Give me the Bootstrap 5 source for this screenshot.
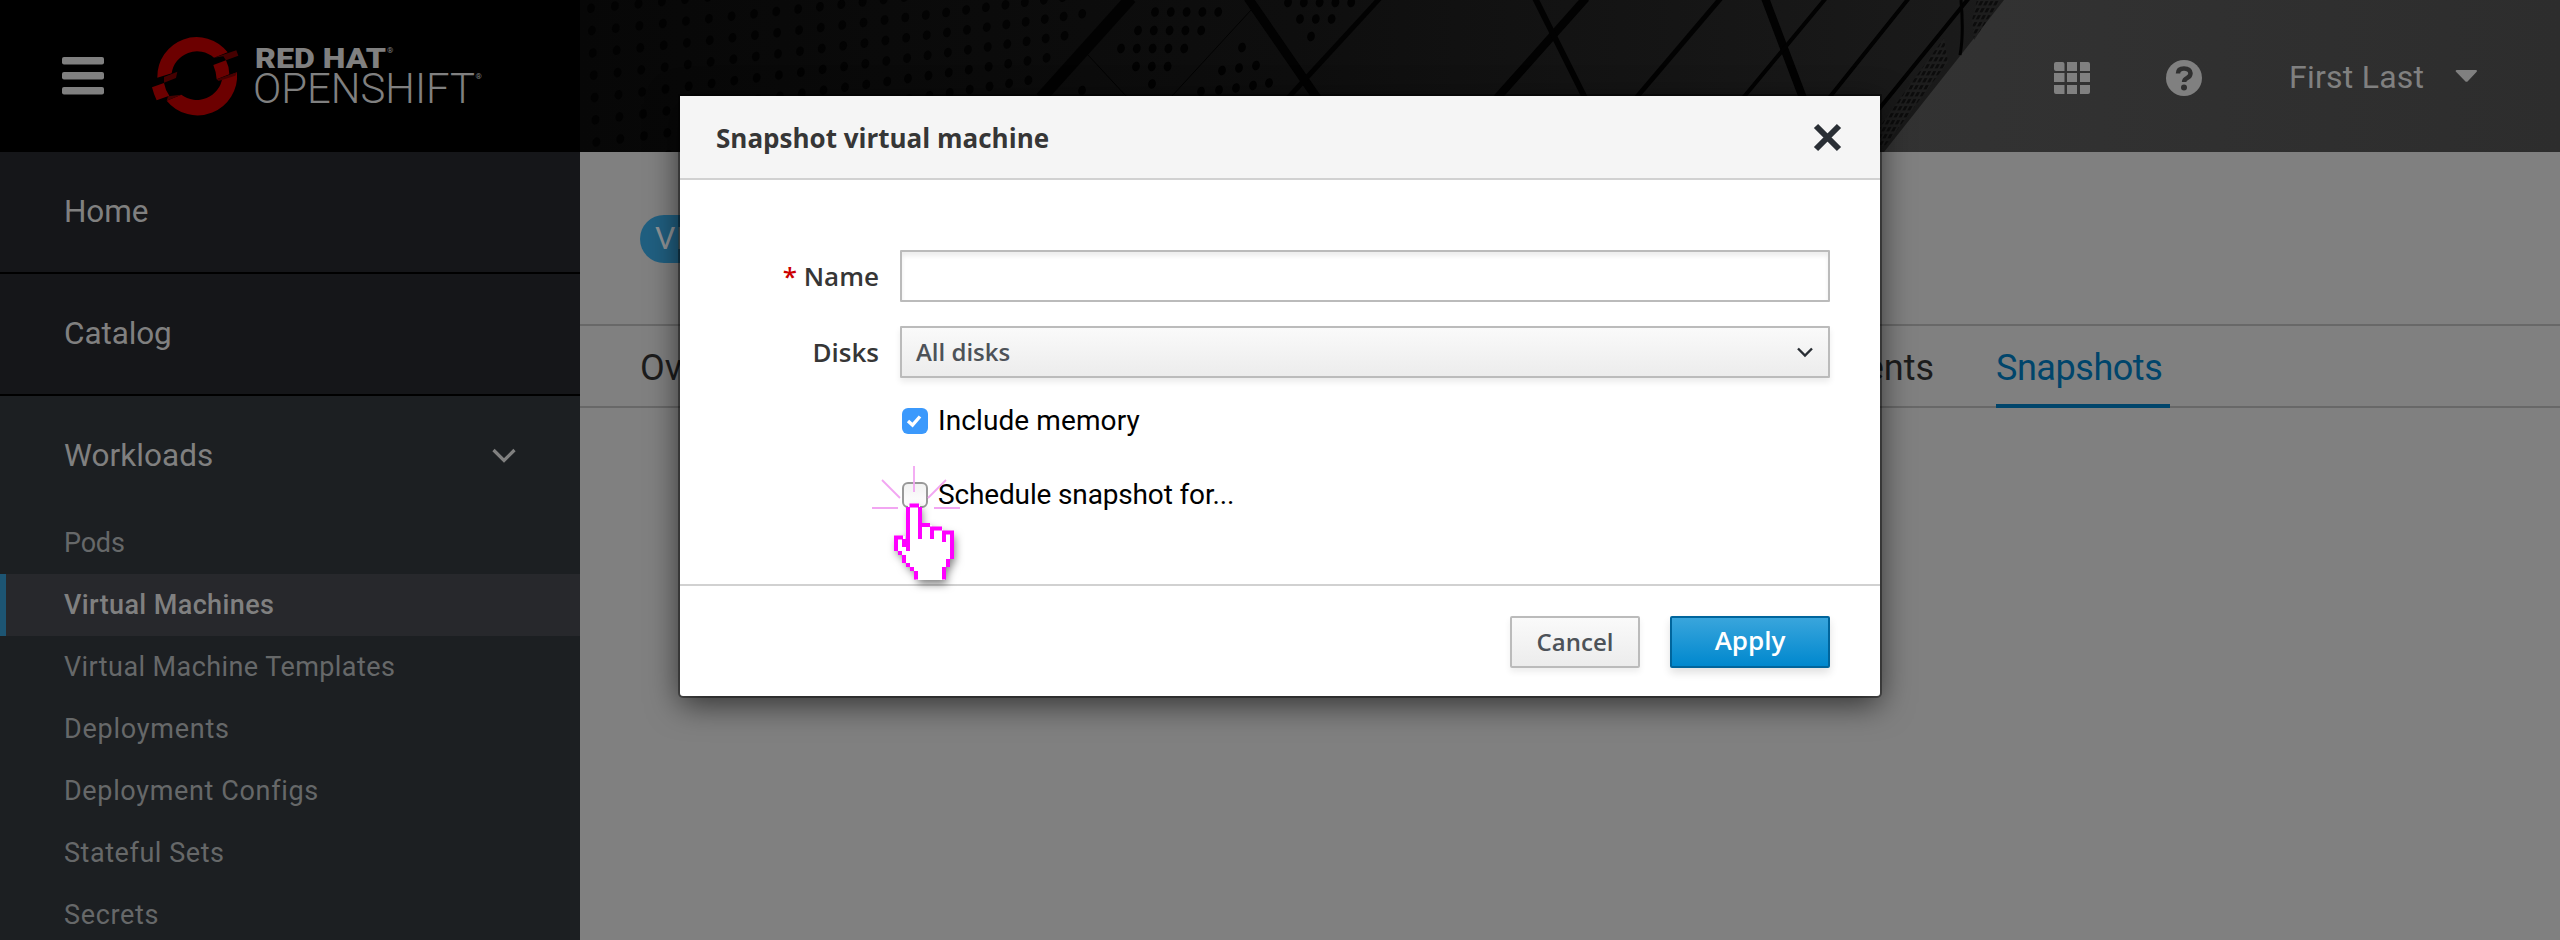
<!DOCTYPE html>
<html lang="en">
<head>
<meta charset="utf-8">
<title>Snapshot virtual machine</title>
<link rel="stylesheet" href="https://cdn.jsdelivr.net/npm/bootstrap@5.3.0/dist/css/bootstrap.min.css">
<style>
body{background:#808080;font-family:Roboto,"Liberation Sans",sans-serif;width:2560px;height:940px;overflow:hidden;position:relative}
.masthead{height:152px;background:#000;position:relative}
.masthead-art{position:absolute;left:580px;top:0}
.brand-zone{width:580px;padding-left:62px}
.tools{position:relative;height:152px}
.side{width:580px;background:#1c1f22;color:#808080;height:788px}
.side-top{height:122px;background:#151619;border-bottom:2px solid #000;padding-left:64px;font-size:31.5px;letter-spacing:-.1px}
.side-group{height:116px;padding:3px 64px 0 64px;font-size:31.5px;letter-spacing:.05px}
.side-item{height:62px;padding:1px 0 0 64px;font-size:27px;color:#666869;letter-spacing:.42px}
.side-item.current{background:#27282c;color:#808080;padding-left:58px;border-left:6px solid #1d5573;font-weight:500;letter-spacing:.38px}
.title-zone{height:172px;padding:63px 0 0 60px}
.kind-pill{height:48px;border-radius:24px;background:#205f80;color:#8f9396;font-size:32px;line-height:47px;padding:0 15px;width:260px}
.tab-strip{height:84px;border:solid #686868;border-width:2px 0;padding-left:60px;font-size:36px;color:#1c1c1c}
.tab-strip a{color:inherit;text-decoration:none;line-height:84px;height:82px;white-space:nowrap}
.tab-strip a.on{color:#00456b;border-bottom:4px solid #00456b;width:174px;margin-left:62px;padding-left:0;letter-spacing:-.45px}
.stage{position:absolute;inset:0}
.snap-dialog{width:1200px;max-width:none;margin:96px 0 0 680px}
.snap-box{height:600px;border:0;border-radius:0 0 3px 3px;background:#fff;box-shadow:0 0 0 2px rgba(0,0,0,.38),0 8px 32px rgba(0,0,0,.62);font-family:"Open Sans","Noto Sans",sans-serif;color:#363636}
.snap-head{height:84px;background:#f5f5f5;border-bottom:2px solid #d1d1d1;padding:1px 38px 0 36px;border-radius:0}
.snap-title{font-size:26px;font-weight:700;line-height:40px}
.snap-body{padding:70px 50px 0 0}
.form-line{height:52px;margin-bottom:24px}
.form-line label{width:199px;text-align:right;font-size:26px;font-weight:600;margin-right:21px}
.form-line label b{color:#c00;font-weight:600}
.name-box,.disk-box{width:930px;height:52px;border:2px solid #bbb;border-radius:1px}
.name-box{box-shadow:inset 0 4px 4px rgba(0,0,0,.07);background:#fff}
.name-box:focus{outline:0}
.disk-box{background:linear-gradient(#fafafa,#ececec);box-shadow:0 4px 6px rgba(0,0,0,.08);font-size:24px;font-weight:600;color:#4d5258;padding:0 16px 0 14px}
.check-line{height:26px;margin:0 0 48px 222px;font-family:Roboto,sans-serif;font-size:28px;color:#000}
.tick{width:26px;height:26px;border-radius:6px;margin-right:10px;flex:none}
.tick-on{background:#3b99fc}
.tick-off{border:2px solid #999;background:linear-gradient(#f2f2f2,#fff)}
.snap-foot{height:112px;border-top:2px solid #d1d1d1;padding:30px 50px 0 0;margin:0}
.act{height:52px;border-radius:2px;padding:0;border-width:2px;font-weight:600;margin:0 0 0 30px}
.act-cancel{width:130px;font-size:24px;color:#4d5258;background:linear-gradient(#fafafa,#ececec);border-color:#bbb;box-shadow:0 4px 6px rgba(0,0,0,.07)}
.act-apply{width:160px;font-size:26px;padding-bottom:3px;color:#fff;background:linear-gradient(#39a5dc,#0088ce);border-color:#00659c;box-shadow:0 5px 8px rgba(0,0,0,.12)}
.pointer{position:absolute;left:870px;top:460px}
</style>
</head>
<body>
<header class="masthead d-flex justify-content-between">
  <svg class="masthead-art" width="1980" height="152" viewBox="580 0 1980 152">
    <defs>
      <linearGradient id="facade"><stop offset="0" stop-color="#070707"/><stop offset=".5" stop-color="#0e0e0e"/><stop offset="1" stop-color="#1b1b1b"/></linearGradient>
      <linearGradient id="sky"><stop offset="0" stop-color="#333"/><stop offset="1" stop-color="#2d2d2d"/></linearGradient>
      <pattern id="mesh" width="5" height="7" patternUnits="userSpaceOnUse" patternTransform="skewX(-28)"><rect width="5" height="7" fill="#1d1d1d"/><rect x="1" y="1" width="3" height="4.5" fill="#0c0c0c"/></pattern>
    </defs>
    <rect x="1870" width="690" height="152" fill="url(#sky)"/>
    <path d="M580 0H2004L1960 56L1884 152H580Z" fill="url(#facade)"/>
    <path d="M1977 0H2001L1974 40L1972 20ZM1944 38L1948 62L1885 146H1880V126Z" fill="url(#mesh)"/>
    <g fill="none" stroke="#020202">
      <path stroke-width="12" d="M1131 -2L1041 98"/><path stroke-width="9" d="M1248 -2L1317 98"/><path stroke-width="5" d="M1380 -2L1288 98"/>
      <path stroke-width="1" d="M1251 10L1172 96M1088 55L1126 96"/>
      <path stroke-width="8" d="M1586 -2L1497 98"/><path stroke-width="6" d="M1535 -2L1585 98"/><path stroke-width="5" d="M1721 -2L1636 98"/>
      <path stroke-width="8" d="M1765 -2L1803 98"/><path stroke-width="4" d="M1826 -2L1743 98M1909 -2L1829 98M1969 -2L1879 109"/><path stroke-width="3" d="M1961 0Q1964 35 1960 55"/>
    </g>
    <g id="holes" fill="#020202"></g>
  </svg>
  <div class="brand-zone position-relative d-flex align-items-center">
    <svg width="42" height="38" viewBox="0 0 42 38" fill="#808080"><rect width="42" height="7.5" rx="2"/><rect y="15" width="42" height="7.5" rx="2"/><rect y="30" width="42" height="7.5" rx="2"/></svg>
    <svg width="450" height="152" viewBox="104 0 450 152">
      <g transform="translate(140 25) scale(.3333)">
        <path fill="#6c0000" d="M52 158A118 119 0 0 1 263 82L222 98A77 77 0 0 0 95 145ZM291 142A119 119 0 0 1 80 227L124 209A77 77 0 0 0 247 159ZM220 120L258 106Q268 126 268 148L230 163Q228 138 220 120ZM36 187L72 174Q76 196 88 212L50 226Q42 210 36 187Z"/>
        <path fill="#450000" d="M222 98L289 76L295 92L258 106L250 94ZM72 156L112 140L108 159L72 173ZM230 163L291 142L286 152L236 168ZM84 214L124 209L80 227Z"/>
      </g>
      <g fill="#808080" font-family="Roboto,sans-serif">
        <text x="255" y="67.5" font-size="28" font-weight="900" textLength="131" lengthAdjust="spacingAndGlyphs">RED HAT</text>
        <text x="253" y="103" font-size="42" font-weight="300" textLength="222" lengthAdjust="spacingAndGlyphs">OPENSHIFT</text>
        <text x="387" y="53" font-size="8">®</text><text x="475.5" y="78.5" font-size="8">®</text>
      </g>
    </svg>
  </div>
  <div class="tools">
    <svg width="506" height="152" viewBox="2054 0 506 152">
      <g fill="#808080">
        <path d="M2056 62h6.500a2 2 0 0 1 2 2v7h-8.500a2 2 0 0 1-2-2v-5a2 2 0 0 1 2-2zM2067 62h10v9h-10zM2080 62h8a2 2 0 0 1 2 2v7h-10zM2054 73h10.500v9h-10.500zM2067 73h10v9h-10zM2080 73h10v9h-10zM2054 85h10.500v9h-8.500a2 2 0 0 1-2-2zM2067 85h10v9h-10zM2080 85h10v7a2 2 0 0 1-2 2h-8z"/>
        <circle cx="2184" cy="78" r="18"/>
        <path d="M2457 70H2476a1 1 0 0 1 .7 1.700L2468 81a2 2 0 0 1-3 0L2456 71.700a1 1 0 0 1 1-1.700z"/>
        <text x="2289" y="88" font-family="Roboto" font-size="32" textLength="135">First Last</text>
      </g>
      <path d="M2178 73.500q0-5 6-5t6.500 4.800q0 3-3.400 4.800q-3 1.500-3 4" fill="none" stroke="#303030" stroke-width="4.500"/><circle cx="2184" cy="87.500" r="3" fill="#303030"/>
    </svg>
  </div>
</header>
<div class="d-flex">
  <nav class="side flex-shrink-0">
    <div class="side-top d-flex align-items-center">Home</div>
    <div class="side-top d-flex align-items-center">Catalog</div>
    <div class="side-group d-flex align-items-center justify-content-between">Workloads
      <svg width="24" height="16" viewBox="0 0 24 16"><path d="M1.500 2L12 12.500L22.500 2" fill="none" stroke="#808080" stroke-width="3.200"/></svg></div>
    <div class="side-item d-flex align-items-center" style="letter-spacing:-.2px">Pods</div>
    <div class="side-item current d-flex align-items-center">Virtual Machines</div>
    <div class="side-item d-flex align-items-center">Virtual Machine Templates</div>
    <div class="side-item d-flex align-items-center" style="letter-spacing:.75px">Deployments</div>
    <div class="side-item d-flex align-items-center" style="letter-spacing:.65px">Deployment Configs</div>
    <div class="side-item d-flex align-items-center" style="letter-spacing:.55px">Stateful Sets</div>
    <div class="side-item d-flex align-items-center" style="letter-spacing:.65px">Secrets</div>
  </nav>
  <main class="flex-grow-1">
    <div class="title-zone"><div class="kind-pill">VI</div></div>
    <div class="tab-strip d-flex"><a href="#" style="width:1117px">Ov</a><a href="#" style="width:177px;text-align:right">ents</a><a href="#" class="on">Snapshots</a></div>
  </main>
</div>
<div class="stage">
  <div class="modal-dialog snap-dialog">
    <div class="modal-content snap-box">
      <div class="modal-header snap-head">
        <div class="snap-title">Snapshot virtual machine</div>
        <svg width="29" height="29" viewBox="0 0 29 29"><path d="M3 3L26 26M26 3L3 26" stroke="#292e34" stroke-width="6"/></svg>
      </div>
      <div class="modal-body snap-body">
        <div class="form-line d-flex align-items-center"><label for="nm"><b>*</b> Name</label><input id="nm" class="name-box"></div>
        <div class="form-line d-flex align-items-center"><label>Disks</label><div class="disk-box d-flex align-items-center justify-content-between"><span>All disks</span>
          <svg width="14" height="10" viewBox="0 0 14 10" overflow="visible"><path d="M0 1.500L7 8.500L14 1.500" fill="none" stroke="#292e34" stroke-width="2.400"/></svg></div></div>
        <div class="check-line d-flex align-items-center" style="margin-top:30px"><span class="tick tick-on d-flex"><svg width="26" height="26" viewBox="0 0 26 26"><path d="M6 13l4.500 4L18 8.500" fill="none" stroke="#fff" stroke-width="3.400"/></svg></span><span style="letter-spacing:.1px">Include memory</span></div>
        <div class="check-line d-flex align-items-center"><span class="tick tick-off"></span><span style="letter-spacing:-.15px">Schedule snapshot for...</span></div>
      </div>
      <div class="modal-footer snap-foot d-flex align-items-start justify-content-end">
        <button class="btn act act-cancel">Cancel</button><button class="btn act act-apply">Apply</button>
      </div>
    </div>
  </div>
</div>
<svg class="pointer" width="120" height="140" viewBox="0 0 120 140">
  <path d="M44 6V32M12 20L30 38M76 20L58 38M2 48H28M64 48H90" stroke="#f2a6f2" stroke-width="1.800" fill="none"/>
  <path style="filter:drop-shadow(2px 4px 4px rgba(0,0,0,.5))" fill="#fff" d="M38 45H50V65H62V69H73V72H83V99H79V107H75V120H46V111H42V107H38V103H34V95H30V91H25V76H35V82H38Z"/>
  <path fill="#f0f" d="M39.500 43.500h9.500v4h-9.500zM36 47h4v44h-4zM48 47h4v32h-4zM52 63h8v4h-8zM60 66.500h12v4h-12zM60 67h4v12h-4zM72 70.500h12v4h-12zM72 71h4v11h-4zM80 74h4v25h-4zM76 99h4v8h-4zM72 107h4v12.500h-4zM24 75.500h9v4h-9zM24 79h4v12h-4zM32 79h4v8h-4zM28 91h4v4h-4zM32 95h4v8h-4zM36 103h4v4h-4zM40 107h4v4h-4zM44 111h4v8.500h-4z"/>
</svg>
<script>
// perforated facade panels behind the masthead
const holes = document.getElementById('holes');
function hole(x, y, o) {
  const e = document.createElementNS('http://www.w3.org/2000/svg', 'ellipse');
  e.setAttribute('cx', x); e.setAttribute('cy', y);
  e.setAttribute('rx', 3.8); e.setAttribute('ry', 4.8);
  e.setAttribute('transform', `rotate(15 ${x} ${y})`);
  e.setAttribute('opacity', o);
  holes.appendChild(e);
}
for (let r = 0; r < 10; r++)
  for (let n = 0; n < 27 - r; n++)
    hole(591 + 24 * n - 0.12 * n * n + r * 0.9, 8.3 + r * (22.3 - 0.14 * n) - 2.25 * n, .9);
[[1155,12,5],[1138,30.5,5],[1121,48.500,5],[1136,66.500,3],[1152,84,1],[1288,2.5,5],[1300,19,3],[1311,36.500,1],[1242,47.500,1],[1082,90.500,1]]
  .forEach(([x, y, c]) => { for (let i = 0; i < c; i++) hole(x + i * 15.8, y, 1); });
[[1222,70.500],[1239,68],[1256,65.500],[1201,91.500],[1219,90],[1236,88],[1253,85.500],[1269,83]].forEach(([x, y]) => hole(x, y, 1));
</script>
<script src="https://cdn.jsdelivr.net/npm/bootstrap@5.3.0/dist/js/bootstrap.bundle.min.js"></script>
</body>
</html>
